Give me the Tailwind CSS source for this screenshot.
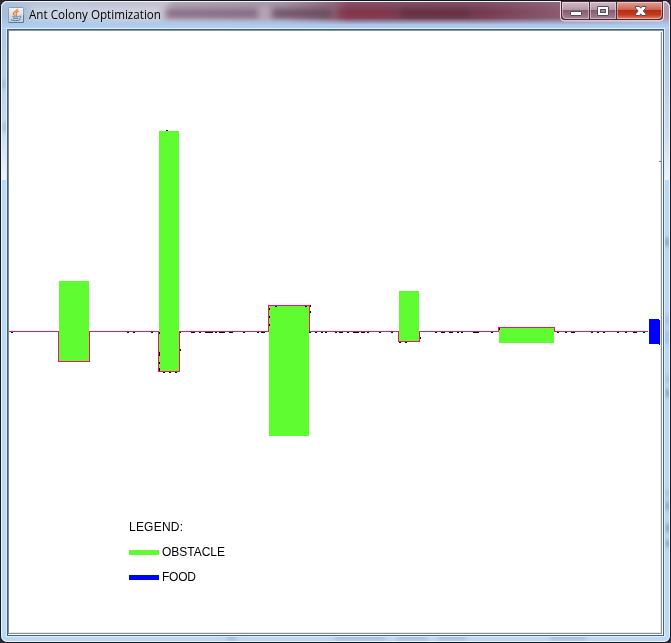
<!DOCTYPE html>
<html lang="en">
<head>
<meta charset="utf-8">
<title>Ant Colony Optimization</title>
<script src="https://cdn.jsdelivr.net/npm/@tailwindcss/browser@4"></script>
</head>
<body class="w-[671px] h-[643px] overflow-hidden bg-[#2a2a30]">
<div class="relative w-[671px] h-[643px] overflow-hidden rounded-[7px] border border-[#15151d] bg-[#b9d9fb]">
  <!-- Glass frame with blurred backdrop -->
  <svg class="absolute -left-px -top-px" width="671" height="643" aria-hidden="true">
    <defs>
      <linearGradient id="glass" x2="1" y2="0">
        <stop offset="0" stop-color="#a6bdda"/><stop offset=".08" stop-color="#b4c1d6"/><stop offset=".25" stop-color="#c3bac8"/><stop offset=".42" stop-color="#b2a0b2"/><stop offset=".5" stop-color="#8b5c70"/><stop offset=".52" stop-color="#7b3b50"/><stop offset=".72" stop-color="#75394e"/><stop offset=".84" stop-color="#8b5b70"/><stop offset="1" stop-color="#b29caf"/>
      </linearGradient>
      <linearGradient id="fade" x2="0" y2="1">
        <stop offset="0" stop-color="#fff" stop-opacity=".12"/><stop offset=".45" stop-color="#b5cfee" stop-opacity="0"/><stop offset=".62" stop-color="#b5cfee" stop-opacity=".05"/><stop offset=".85" stop-color="#abcbef" stop-opacity=".95"/><stop offset="1" stop-color="#b5d4f5"/>
      </linearGradient>
      <linearGradient id="side" x2="0" y2="1">
        <stop offset="0" stop-color="#aec8e8"/><stop offset=".35" stop-color="#bad0ed"/><stop offset=".7" stop-color="#cbdcf2"/><stop offset="1" stop-color="#edf5fd"/>
      </linearGradient>
      <filter id="soft" x="-50%" y="-50%" width="200%" height="200%"><feGaussianBlur stdDeviation="3"/></filter>
      <filter id="softer" x="-100%" y="-100%" width="300%" height="300%"><feGaussianBlur stdDeviation="2"/></filter>
    </defs>
    <rect x="1" y="28" width="6" height="152" fill="url(#side)"/>
    <rect x="664" y="28" width="6" height="152" fill="url(#side)"/>
    <rect width="671" height="29" fill="url(#glass)"/>
    <g filter="url(#soft)">
      <rect x="166" y="8" width="92" height="11" fill="#765a72" opacity=".75"/>
      <rect x="272" y="8" width="60" height="11" fill="#634359" opacity=".8"/>
      <rect x="338" y="6" width="50" height="14" fill="#853249" opacity=".7"/>
      <rect x="400" y="7" width="70" height="12" fill="#5d2b3e" opacity=".75"/>
      <rect x="30" y="7" width="130" height="15" fill="#dce3ed" opacity=".6"/>
      <rect x="170" y="1" width="390" height="4" fill="#6e5068" opacity=".5"/>
    </g>
    <rect width="671" height="29" fill="url(#fade)"/>
    <g filter="url(#softer)" fill="#54779e">
      <path d="M2 80h4v8h-4zM3 122h4v10h-4z" opacity=".35"/>
      <path d="M665 238h4v8h-4zM666 389h4v8h-4zM666 502h4v8h-4zM666 524h4v8h-4zM666 540h4v7h-4z" opacity=".7"/>
      <path d="M665 315h4v10h-4zM665 330h4v14h-4zM666 375h4v8h-4zM665 490h4v7h-4z" opacity=".3"/>
      <path d="M227 636h9v4h-9zM335 636h50v3h-50zM397 636h30v3h-30zM438 636h28v3h-28zM550 636h36v3h-36z" opacity=".4"/>
    </g>
    <rect x="1.5" y="1.5" width="668" height="640" rx="6" fill="none" stroke="#eef5fc"/>
    <rect x="6.5" y="28.5" width="658" height="608" fill="none" stroke="#dfeefd"/>
  </svg>

  <!-- Title bar -->
  <header class="relative flex h-[28px] w-full items-start">
    <svg class="ml-[7px] mt-[6px] shrink-0" width="16" height="16" viewBox="0 0 16 16" aria-hidden="true">
      <defs><linearGradient id="tile" x2="0" y2="1"><stop stop-color="#f4f6f8"/><stop offset="1" stop-color="#bccbd8"/></linearGradient></defs>
      <rect x=".5" y=".5" width="15" height="15" rx="1" fill="url(#tile)" stroke="#8ba0b3"/>
      <path d="M.5 15.5h15V8" fill="none" stroke="#5f7c95"/>
      <path d="M9.4 1.8C9.8 4 5 4.8 5.3 6.7c.1.8 1.2 1.3 1.5 2.2M10.8 4.2C8.7 5 7.5 5.9 8.2 7c.5.8.5 1.2-.2 1.9" fill="none" stroke="#ed7a25" stroke-width="1.3"/>
      <path d="M4.4 9.4c1 .7 5 .7 6.3 0M5 11c1.4.6 3.9.6 5.1 0M3 12.6c1.5 1.3 7.6 1.3 9.3 0M11.1 9.2c2.6-.7 2.4 1.9-.2 2.4" fill="none" stroke="#597e9c" stroke-width="1"/>
    </svg>
    <svg class="ml-[5px] shrink-0" width="136" height="28"><text x="0" y="18" textLength="132" lengthAdjust="spacingAndGlyphs" font-family="'Open Sans','Noto Sans',sans-serif" font-size="12" fill="#000">Ant Colony Optimization</text></svg>
    <svg class="ml-auto shrink-0" width="111" height="22" viewBox="559 0 111 22" role="img" aria-label="Window controls">
      <defs>
        <linearGradient id="btn" x2="0" y2="1"><stop stop-color="#d0bac5"/><stop offset=".44" stop-color="#b797a6"/><stop offset=".48" stop-color="#87596d"/><stop offset="1" stop-color="#a78291"/></linearGradient>
        <linearGradient id="close" x2="0" y2="1"><stop stop-color="#e0a197"/><stop offset=".44" stop-color="#cd6553"/><stop offset=".48" stop-color="#b52b14"/><stop offset=".75" stop-color="#c33c1e"/><stop offset="1" stop-color="#de8060"/></linearGradient>
      </defs>
      <path d="M560.5 0v16q0 4 4 4h95q4 0 4-4V0" fill="#fff" fill-opacity=".2" stroke="#eadfe7"/>
      <path d="M561 0h102v15q0 4-4 4h-94q-4 0-4-4z" fill="#4b2b3a"/>
      <path d="M562 1h27v17h-23q-4 0-4-4z" fill="url(#btn)"/>
      <path d="M590 1h26v17h-26z" fill="url(#btn)"/>
      <path d="M617 1h45v13q0 4-4 4h-41z" fill="url(#close)"/>
      <path d="M562.5 1.5h26v16h-22q-4 0-4-4zM590.5 1.5h25v16h-25zM617.5 1.5h44v12q0 4-4 4h-40z" fill="none" stroke="#fff" stroke-opacity=".4"/>
      <rect x="570.5" y="10.5" width="11" height="4" rx=".5" fill="#fff" stroke="#50505f"/>
      <rect x="597.5" y="5.5" width="11" height="9" rx=".5" fill="#fff" stroke="#50505f"/>
      <rect x="600.5" y="8.5" width="5" height="3" fill="#a58494" stroke="#50505f"/>
      <path d="M635.5 5.5h4l1.200 1.700 1.200-1.700h4v1.500l-2.600 3 2.600 3v1.500h-4l-1.200-1.700-1.200 1.700h-4v-1.500l2.600-3-2.600-3z" fill="#fff" stroke="#54505f"/>
    </svg>
  </header>

  <!-- Simulation canvas -->
  <main class="relative ml-[6px] h-[607px] w-[657px] bg-white">
    <svg width="657" height="607" viewBox="7 29 657 607" shape-rendering="crispEdges">
      <path d="M7 29h657v1H7zM7 29h1v607H7zM663 29h1v607h-1zM7 635h657v1H7z" fill="#4c5f70"/>
      <path d="M8 30h655v1H8z" fill="#7d9aa3"/>
      <path d="M8 30h1v604H8z" fill="#7d8d9d"/>
      <path d="M661 32h1v602h-1zM9 633h653v1H9z" fill="#82929f"/>
      <path d="M660 32h1v601h-1zM10 632h651v1H10z" fill="#e6e8e8"/>
      <path d="M659 161h2v1h-2z" fill="#777"/>
      <g fill="#5efc30">
        <rect x="59" y="281" width="30" height="80"/>
        <rect x="159" y="131" width="20" height="240"/>
        <rect x="269" y="306" width="40" height="130"/>
        <rect x="399" y="291" width="20" height="50"/>
        <rect x="499" y="328" width="55" height="15"/>
        <rect x="129" y="550" width="30" height="5"/>
      </g>
      <g fill="#0000fe">
        <rect x="649" y="319" width="10" height="25"/>
        <rect x="659" y="320" width="1" height="25"/>
        <rect x="129" y="575" width="30" height="5"/>
      </g>
      <path d="M9 331.500H58.500V361.500H89.500V331.500H158.500V371.500H179.500V331.500H268.500V305.500H309.500V331.500H398.500V341.500H419.500V331.500H498.500V327.500H554.500V331.500H648" fill="none" stroke="#f5106a"/>
      <!-- Ants walking along the trail -->
      <path d="M11 332h2v1h-2zM127 332h2v1h-2zM133 332h2v1h-2zM151 332h2v1h-2zM180 332h1v1h-1zM191 332h4v1h-4zM199 332h2v1h-2zM205 332h8v1h-8zM215 332h2v1h-2zM219 332h6v1h-6zM229 332h4v1h-4zM243 332h2v1h-2zM257 332h2v1h-2zM261 332h4v1h-4zM309 332h2v1h-2zM315 332h2v1h-2zM321 332h2v1h-2zM325 332h2v1h-2zM335 332h2v1h-2zM339 332h4v1h-4zM347 332h2v1h-2zM353 332h6v1h-6zM361 332h4v1h-4zM367 332h2v1h-2zM379 332h2v1h-2zM391 332h2v1h-2zM435 332h2v1h-2zM441 332h4v1h-4zM449 332h4v1h-4zM457 332h2v1h-2zM461 332h2v1h-2zM473 332h6v1h-6zM491 332h2v1h-2zM557 332h2v1h-2zM565 332h2v1h-2zM571 332h4v1h-4zM591 332h2v1h-2zM597 332h2v1h-2zM603 332h2v1h-2zM617 332h2v1h-2zM625 332h2v1h-2zM633 332h4v1h-4zM643 332h2v1h-2z"/>
      <path d="M166 130h2v1h-2zM159 332h1v2h-1zM159 352h1v4h-1zM159 362h1v2h-1zM159 368h1v3h-1zM180 349h1v2h-1zM163 372h2v1h-2zM169 372h2v1h-2zM175 372h2v1h-2zM269 308h1v2h-1zM269 316h1v2h-1zM269 324h1v2h-1zM275 306h2v1h-2zM305 306h2v1h-2zM310 305h1v2h-1zM310 311h1v2h-1zM399 342h2v1h-2zM405 342h2v1h-2zM420 337h1v2h-1zM499 328h1v2h-1z"/>
      <g font-family="'Liberation Sans',Arial,sans-serif" font-size="12" fill="#000" shape-rendering="auto">
        <text x="129" y="531" textLength="54">LEGEND:</text>
        <text x="162" y="556" textLength="63">OBSTACLE</text>
        <text x="162" y="581" textLength="34">FOOD</text>
      </g>
    </svg>
  </main>
</div>
</body>
</html>
